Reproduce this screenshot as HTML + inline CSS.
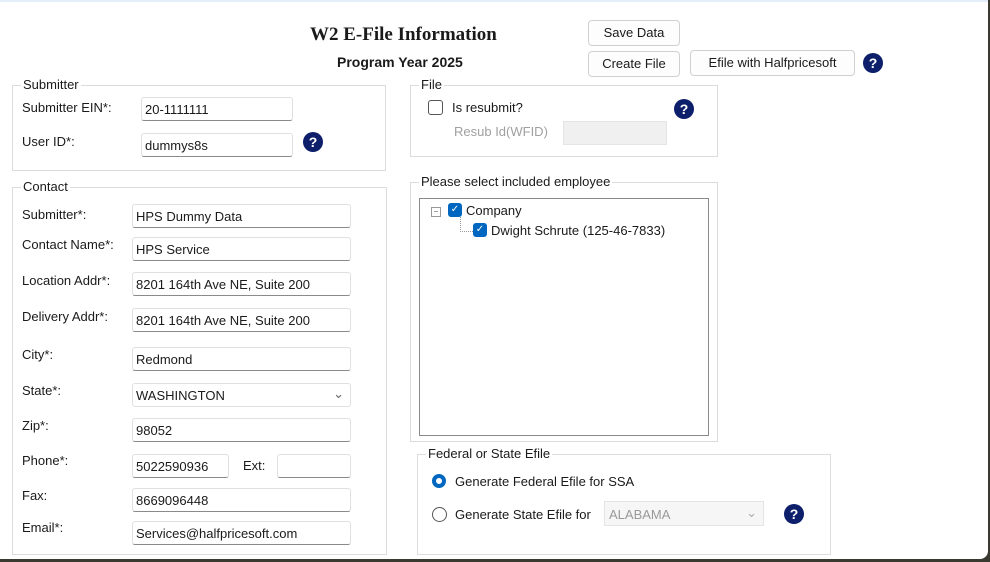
<!DOCTYPE html>
<html><head><style>
body{margin:0;width:990px;height:562px;overflow:hidden;background:#3a3a30;font-family:"Liberation Sans",sans-serif;font-size:13px;color:#1a1a1a}
#w{position:absolute;left:0;top:0;width:988px;height:559px;background:#fff;border-radius:0 0 8px 0;box-shadow:inset 0 2px 0 #e4eefa}
.a{position:absolute}
.g{position:absolute;border:1px solid #dcdcdc}
.lg{position:absolute;top:-9px;left:8px;background:#fff;padding:0 2px;font-size:13px}
.in{position:absolute;border:1px solid #e0e0e0;border-bottom:1px solid #8a8a8a;border-radius:3px;height:22px;box-sizing:border-box;padding:4px 3px;font-size:13px;background:#fff;line-height:15px}
.btn{position:absolute;border:1px solid #d0d0d0;border-radius:4px;background:#fdfdfd;text-align:center;line-height:23px;font-size:13px}
.q{position:absolute;width:20px;height:20px;border-radius:50%;background:#0d1e6b;color:#fff;font-weight:bold;font-size:14px;text-align:center;line-height:20px}
.cb{position:absolute;width:14px;height:14px;border-radius:3px;background:#0067c0;color:#fff;font-size:10px;line-height:14px;text-align:center}
</style></head><body><div id="w">
<div class="a" style="left:310px;top:24px;font-family:'Liberation Serif',serif;font-weight:bold;font-size:19px">W2 E-File Information</div>
<div class="a" style="left:337px;top:54px;font-weight:bold;font-size:14px">Program Year 2025</div>
<div class="btn" style="left:588px;top:20px;width:90px;height:24px">Save Data</div>
<div class="btn" style="left:588px;top:51px;width:90px;height:24px">Create File</div>
<div class="btn" style="left:690px;top:50px;width:163px;height:24px">Efile with Halfpricesoft</div>
<div class="q" style="left:863px;top:53px">?</div>

<div class="g" style="left:12px;top:85px;width:372px;height:84px"><span class="lg">Submitter</span></div>
<div class="a" style="left:22px;top:100px">Submitter EIN*:</div>
<div class="in" style="left:141px;top:97px;width:152px;height:24px">20-1111111</div>
<div class="a" style="left:22px;top:134px">User ID*:</div>
<div class="in" style="left:141px;top:133px;width:152px;height:24px">dummys8s</div>
<div class="q" style="left:303px;top:132px">?</div>

<div class="g" style="left:12px;top:187px;width:373px;height:366px"><span class="lg">Contact</span></div>
<div class="a" style="left:22px;top:207px">Submitter*:</div>
<div class="a" style="left:22px;top:237px">Contact Name*:</div>
<div class="a" style="left:22px;top:273px">Location Addr*:</div>
<div class="a" style="left:22px;top:309px">Delivery Addr*:</div>
<div class="a" style="left:22px;top:347px">City*:</div>
<div class="a" style="left:22px;top:383px">State*:</div>
<div class="a" style="left:22px;top:418px">Zip*:</div>
<div class="a" style="left:22px;top:453px">Phone*:</div>
<div class="a" style="left:22px;top:488px">Fax:</div>
<div class="a" style="left:22px;top:520px">Email*:</div>
<div class="in" style="left:132px;top:204px;width:219px;height:24px">HPS Dummy Data</div>
<div class="in" style="left:132px;top:237px;width:219px;height:24px">HPS Service</div>
<div class="in" style="left:132px;top:272px;width:219px;height:24px">8201 164th Ave NE, Suite 200</div>
<div class="in" style="left:132px;top:308px;width:219px;height:24px">8201 164th Ave NE, Suite 200</div>
<div class="in" style="left:132px;top:347px;width:219px;height:24px">Redmond</div>
<div class="in" style="left:132px;top:383px;width:219px;height:24px;border-bottom-color:#e0e0e0">WASHINGTON<span style="position:absolute;right:6px;top:2px;color:#666">&#8964;</span></div>
<div class="in" style="left:132px;top:418px;width:219px;height:24px">98052</div>
<div class="in" style="left:132px;top:454px;width:97px;height:24px">5022590936</div>
<div class="a" style="left:243px;top:458px">Ext:</div>
<div class="in" style="left:277px;top:454px;width:74px;height:24px"></div>
<div class="in" style="left:132px;top:488px;width:219px;height:24px">8669096448</div>
<div class="in" style="left:132px;top:521px;width:219px;height:24px">Services@halfpricesoft.com</div>

<div class="g" style="left:410px;top:85px;width:306px;height:70px"><span class="lg">File</span></div>
<div class="a" style="left:428px;top:100px;width:13px;height:13px;border:1px solid #555;border-radius:3px"></div>
<div class="a" style="left:452px;top:100px">Is resubmit?</div>
<div class="q" style="left:674px;top:99px">?</div>
<div class="a" style="left:454px;top:124px;color:#a0a0a0">Resub Id(WFID)</div>
<div class="a" style="left:563px;top:121px;width:104px;height:24px;background:#f0f0f0;border:1px solid #e4e4e4;box-sizing:border-box"></div>

<div class="g" style="left:410px;top:182px;width:306px;height:258px"><span class="lg">Please select included employee</span></div>
<div class="a" style="left:419px;top:198px;width:290px;height:238px;border:1px solid #8a8a8a;box-sizing:border-box"></div>
<div class="a" style="left:431px;top:207px;width:8px;height:8px;border:1px solid #999;font-size:8px;line-height:7px;text-align:center;color:#555">−</div>
<div class="a" style="left:460px;top:217px;width:12px;height:14px;border-left:1px dotted #999;border-bottom:1px dotted #999"></div>
<div class="cb" style="left:448px;top:203px">✓</div>
<div class="a" style="left:466px;top:203px">Company</div>
<div class="cb" style="left:473px;top:223px">✓</div>
<div class="a" style="left:491px;top:223px">Dwight Schrute (125-46-7833)</div>

<div class="g" style="left:417px;top:454px;width:412px;height:99px"><span class="lg">Federal or State Efile</span></div>
<div class="a" style="left:432px;top:474px;width:6px;height:6px;border:4px solid #0067c0;border-radius:50%"></div>
<div class="a" style="left:455px;top:474px">Generate Federal Efile for SSA</div>
<div class="a" style="left:432px;top:507px;width:13px;height:13px;border:1px solid #555;border-radius:50%"></div>
<div class="a" style="left:455px;top:507px">Generate State Efile for</div>
<div class="a" style="left:604px;top:501px;width:160px;height:25px;background:#f6f6f6;border:1px solid #e4e4e4;box-sizing:border-box;color:#999;padding:5px 4px">ALABAMA<span style="position:absolute;right:6px;top:3px;color:#aaa">&#8964;</span></div>
<div class="q" style="left:784px;top:504px">?</div>
</div></body></html>
